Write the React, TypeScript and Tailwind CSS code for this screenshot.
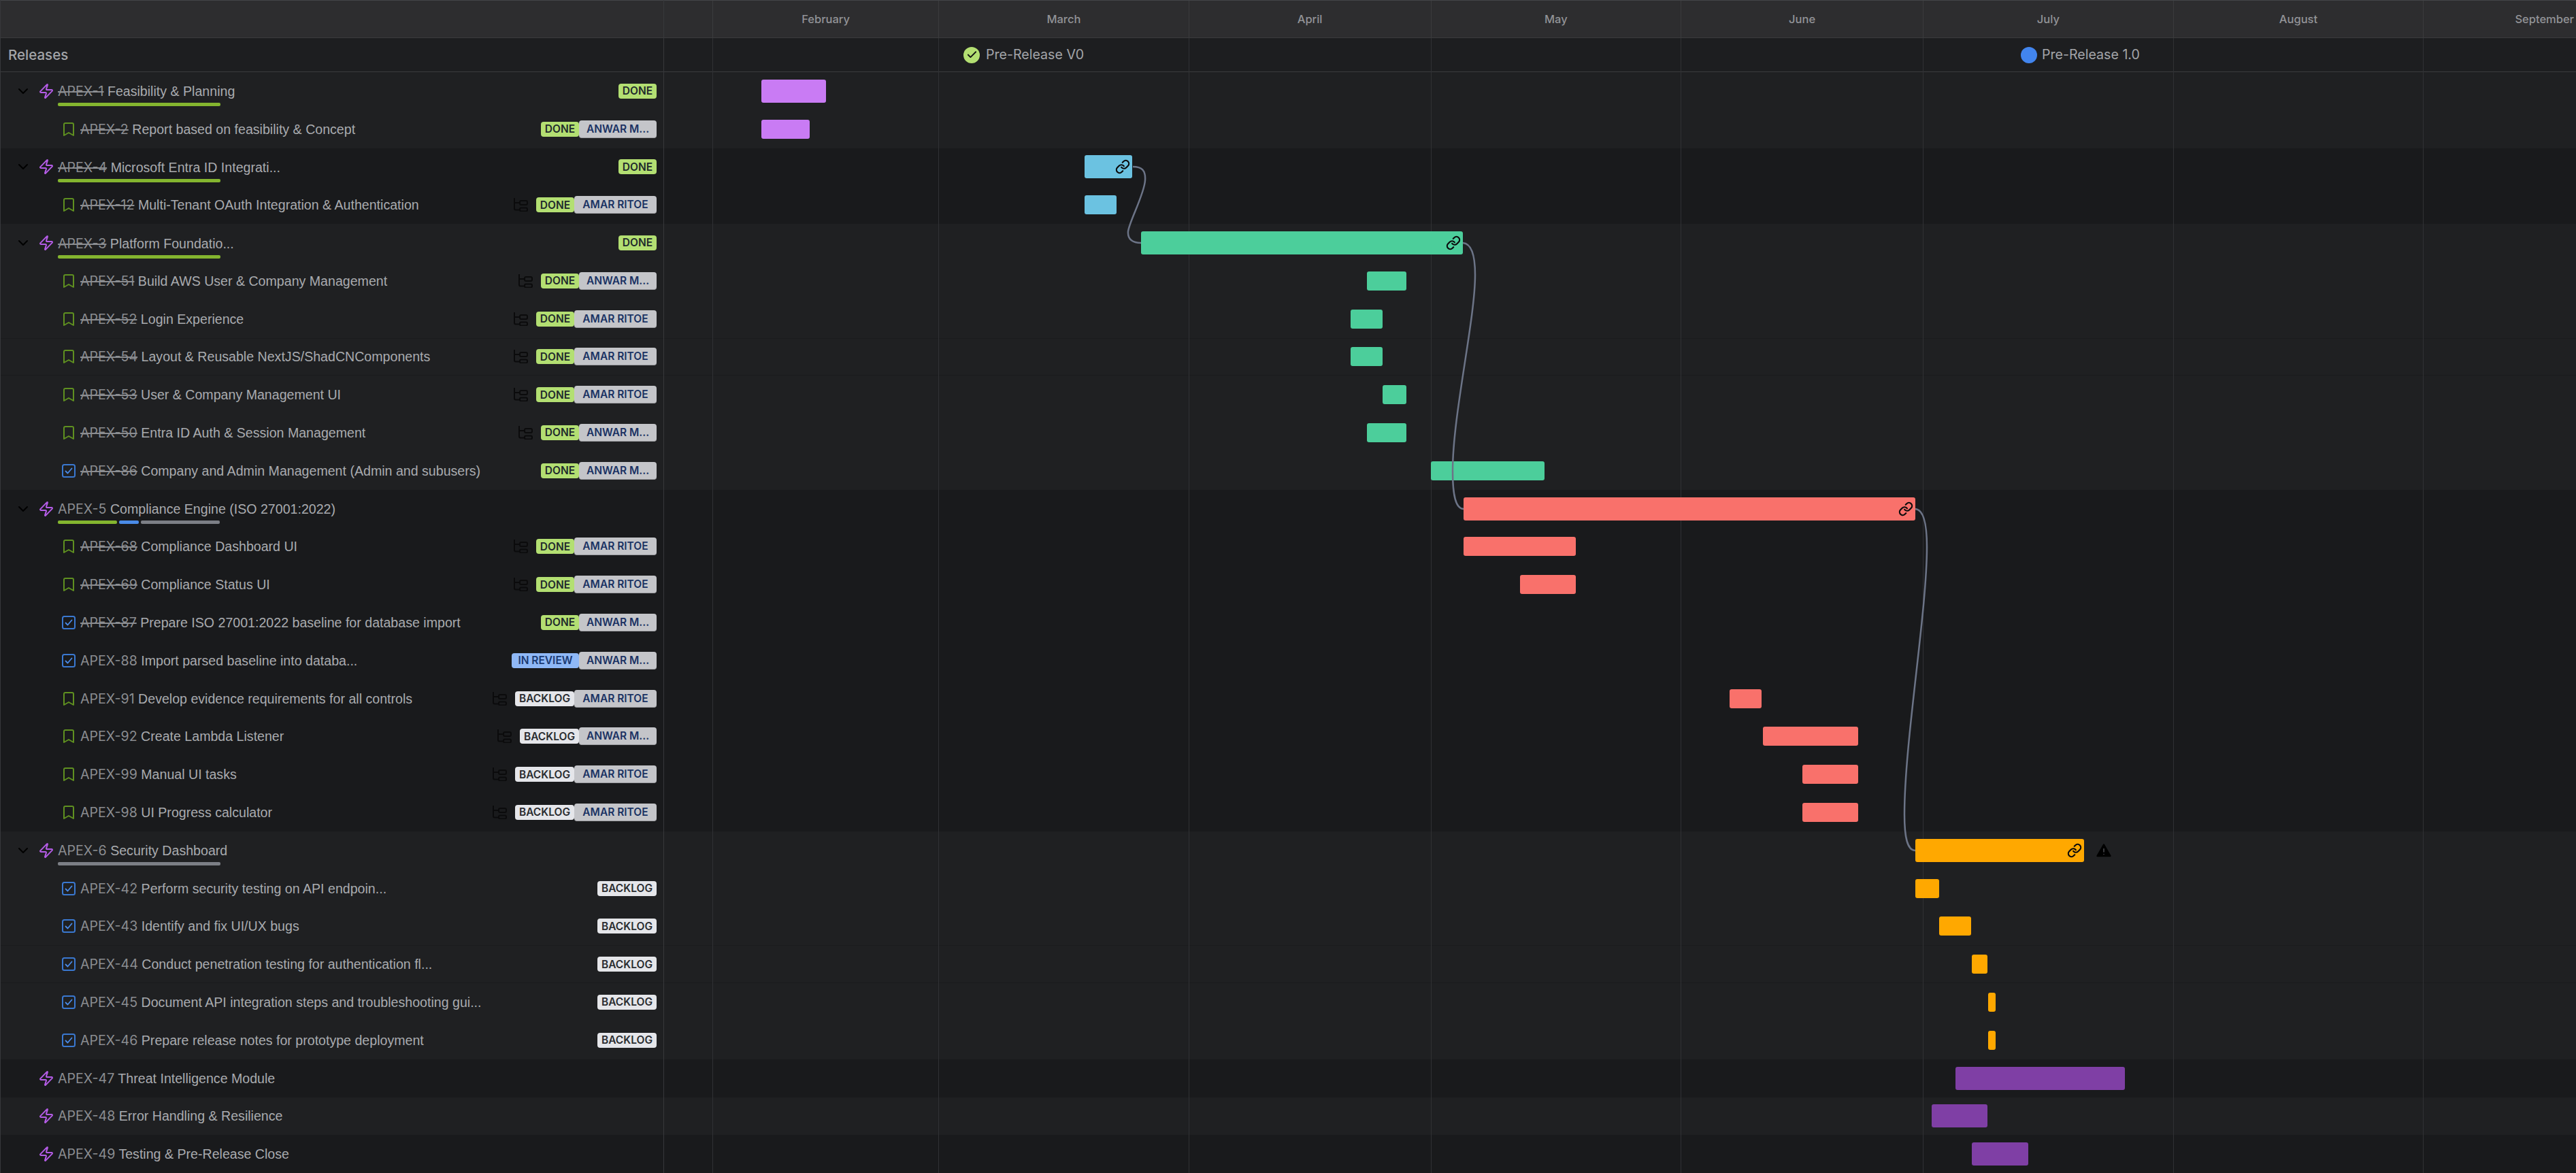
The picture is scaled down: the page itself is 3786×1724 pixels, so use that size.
import { Bookmark, Check, ChevronDown, Zap } from "lucide-react";

const DAY = 11.86;
const PANEL_W = 976;

type Status = "DONE" | "IN REVIEW" | "BACKLOG";

interface Row {
  kind: "epic" | "story" | "task";
  key: string;
  title: string;
  done?: boolean;
  status?: Status;
  owner?: string;
  tree?: boolean;
  progress?: { color: string; width: number }[];
  expandable?: boolean;
  bar?: [number, number];
  color?: string;
  link?: boolean;
  warn?: boolean;
  dark?: boolean;
  lined?: boolean;
}

const AMAR = "AMAR RITOE";
const ANWAR = "ANWAR M...";
const GREEN_BAR = [{ color: "#84b52f", width: 239 }];
const GRAY_BAR = [{ color: "#7c7f86", width: 239 }];

const PURPLE = "#c97bf4";
const BLUE = "#6bc2e1";
const GREEN = "#4cce9b";
const RED = "#f9716b";
const ORANGE = "#ffa800";
const VIOLET = "#7f3fa5";

const ROWS: Row[] = [
  { kind: "epic", key: "APEX-1", title: "Feasibility & Planning", done: true, status: "DONE", progress: GREEN_BAR, expandable: true, bar: [1119, 1214], color: PURPLE },
  { kind: "story", key: "APEX-2", title: "Report based on feasibility & Concept", done: true, status: "DONE", owner: ANWAR, bar: [1119, 1190], color: PURPLE },
  { kind: "epic", key: "APEX-4", title: "Microsoft Entra ID Integrati...", done: true, status: "DONE", progress: GREEN_BAR, expandable: true, bar: [1594, 1664], color: BLUE, link: true, dark: true },
  { kind: "story", key: "APEX-12", title: "Multi-Tenant OAuth Integration & Authentication", done: true, status: "DONE", owner: AMAR, tree: true, bar: [1594, 1641], color: BLUE, dark: true },
  { kind: "epic", key: "APEX-3", title: "Platform Foundatio...", done: true, status: "DONE", progress: GREEN_BAR, expandable: true, bar: [1677, 2150], color: GREEN, link: true },
  { kind: "story", key: "APEX-51", title: "Build AWS User & Company Management", done: true, status: "DONE", owner: ANWAR, tree: true, bar: [2009, 2067], color: GREEN },
  { kind: "story", key: "APEX-52", title: "Login Experience", done: true, status: "DONE", owner: AMAR, tree: true, bar: [1985, 2032], color: GREEN },
  { kind: "story", key: "APEX-54", title: "Layout & Reusable NextJS/ShadCNComponents", done: true, status: "DONE", owner: AMAR, tree: true, bar: [1985, 2032], color: GREEN, lined: true },
  { kind: "story", key: "APEX-53", title: "User & Company Management UI", done: true, status: "DONE", owner: AMAR, tree: true, bar: [2032, 2067], color: GREEN },
  { kind: "story", key: "APEX-50", title: "Entra ID Auth & Session Management", done: true, status: "DONE", owner: ANWAR, tree: true, bar: [2009, 2067], color: GREEN },
  { kind: "task", key: "APEX-86", title: "Company and Admin Management (Admin and subusers)", done: true, status: "DONE", owner: ANWAR, bar: [2103, 2270], color: GREEN },
  {
    kind: "epic", key: "APEX-5", title: "Compliance Engine (ISO 27001:2022)", expandable: true, dark: true, link: true,
    progress: [{ color: "#84b52f", width: 87 }, { color: "#4a8be8", width: 29 }, { color: "#7c7f86", width: 116 }],
    bar: [2151, 2815], color: RED,
  },
  { kind: "story", key: "APEX-68", title: "Compliance Dashboard UI", done: true, status: "DONE", owner: AMAR, tree: true, bar: [2151, 2316], color: RED, dark: true },
  { kind: "story", key: "APEX-69", title: "Compliance Status UI", done: true, status: "DONE", owner: AMAR, tree: true, bar: [2234, 2316], color: RED, dark: true },
  { kind: "task", key: "APEX-87", title: "Prepare ISO 27001:2022 baseline for database import", done: true, status: "DONE", owner: ANWAR, dark: true },
  { kind: "task", key: "APEX-88", title: "Import parsed baseline into databa...", status: "IN REVIEW", owner: ANWAR, dark: true },
  { kind: "story", key: "APEX-91", title: "Develop evidence requirements for all controls", status: "BACKLOG", owner: AMAR, tree: true, bar: [2542, 2589], color: RED, dark: true },
  { kind: "story", key: "APEX-92", title: "Create Lambda Listener", status: "BACKLOG", owner: ANWAR, tree: true, bar: [2591, 2731], color: RED, dark: true },
  { kind: "story", key: "APEX-99", title: "Manual UI tasks", status: "BACKLOG", owner: AMAR, tree: true, bar: [2649, 2731], color: RED, dark: true },
  { kind: "story", key: "APEX-98", title: "UI Progress calculator", status: "BACKLOG", owner: AMAR, tree: true, bar: [2649, 2731], color: RED, dark: true },
  { kind: "epic", key: "APEX-6", title: "Security Dashboard", expandable: true, progress: GRAY_BAR, bar: [2815, 3063], color: ORANGE, link: true, warn: true },
  { kind: "task", key: "APEX-42", title: "Perform security testing on API endpoin...", status: "BACKLOG", bar: [2815, 2850], color: ORANGE },
  { kind: "task", key: "APEX-43", title: "Identify and fix UI/UX bugs", status: "BACKLOG", bar: [2850, 2897], color: ORANGE },
  { kind: "task", key: "APEX-44", title: "Conduct penetration testing for authentication fl...", status: "BACKLOG", bar: [2898, 2921], color: ORANGE, lined: true },
  { kind: "task", key: "APEX-45", title: "Document API integration steps and troubleshooting gui...", status: "BACKLOG", bar: [2922, 2933], color: ORANGE },
  { kind: "task", key: "APEX-46", title: "Prepare release notes for prototype deployment", status: "BACKLOG", bar: [2922, 2933], color: ORANGE },
  { kind: "epic", key: "APEX-47", title: "Threat Intelligence Module", bar: [2874, 3123], color: VIOLET, dark: true },
  { kind: "epic", key: "APEX-48", title: "Error Handling & Resilience", bar: [2839, 2921], color: VIOLET },
  { kind: "epic", key: "APEX-49", title: "Testing & Pre-Release Close", bar: [2898, 2981], color: VIOLET, dark: true },
];

const MONTHS = [
  { name: "February", days: 28 },
  { name: "March", days: 31 },
  { name: "April", days: 30 },
  { name: "May", days: 31 },
  { name: "June", days: 30 },
  { name: "July", days: 31 },
  { name: "August", days: 31 },
  { name: "September", days: 30 },
];

const STATUS_STYLE: Record<Status, string> = {
  DONE: "bg-[#b3df72] text-[#1f2a2c] w-[56px]",
  "IN REVIEW": "bg-[#8fb8f6] text-[#1b3a72] w-[99px]",
  BACKLOG: "bg-[#e5e6ea] text-[#2a2c30] w-[87px]",
};

function TreeIcon() {
  return (
    <svg width="22" height="20" viewBox="0 0 22 20" fill="none" stroke="#0b0b0c" strokeWidth="2" className="shrink-0">
      <path d="M2 0v15.5a2 2 0 0 0 2 2h5M2 7h7" />
      <rect x="10" y="4" width="11" height="6" rx="2" />
      <rect x="10" y="14.5" width="11" height="5" rx="2" />
    </svg>
  );
}

function TaskIcon() {
  return (
    <svg width="24" height="24" viewBox="0 0 24 24" fill="none" strokeLinecap="round" strokeLinejoin="round" className="shrink-0 mr-[5px]">
      <rect x="3" y="3" width="18" height="18" rx="2.5" stroke="#3a78d0" strokeWidth="2" />
      <path d="M7.5 12.5l3 3l6-7" stroke="#4a8be8" strokeWidth="1.8" />
    </svg>
  );
}

function LinkIcon() {
  return (
    <svg width="22" height="22" viewBox="0 0 24 24" fill="none" stroke="#0b0b0c" strokeWidth="2.4" strokeLinecap="round" strokeLinejoin="round">
      <path d="M10 13a5 5 0 0 0 7.54.54l3-3a5 5 0 0 0-7.07-7.07l-1.72 1.71" />
      <path d="M14 11a5 5 0 0 0-7.54-.54l-3 3a5 5 0 0 0 7.07 7.07l1.71-1.71" />
    </svg>
  );
}

function WarnIcon() {
  return (
    <svg width="22" height="20" viewBox="0 0 22 20" className="ml-[18px] shrink-0">
      <path d="M11 1.5L20.5 18H1.5Z" fill="#000" stroke="#000" strokeWidth="2.4" strokeLinejoin="round" />
      <path d="M11 7v5.5M11 15v1" stroke="#3a3b3e" strokeWidth="2" />
    </svg>
  );
}

function rowBg(row: Row) {
  const base = row.dark ? "bg-[#191a1c]" : "bg-[#1f2022]";
  return row.lined ? `${base} border-y border-[#1a1b1d]` : base;
}

function LeftRow({ row }: { row: Row }) {
  const isEpic = row.kind === "epic";
  return (
    <div className={`h-[55.8px] flex items-center pr-[10px] ${rowBg(row)} ${isEpic ? "pl-[21px]" : "pl-[88px]"}`}>
      {isEpic && (
        <span className="w-[24px] mr-[10px] shrink-0">
          {row.expandable && <ChevronDown size={24} strokeWidth={2} color="#000" />}
        </span>
      )}
      {row.kind === "epic" && <Zap size={24} strokeWidth={2} color="#b45ce6" className="shrink-0 mr-[5px]" />}
      {row.kind === "story" && <Bookmark size={24} strokeWidth={2} color="#5f9020" className="shrink-0 mr-[5px]" />}
      {row.kind === "task" && <TaskIcon />}
      <div className={`flex flex-col min-w-0 ${row.progress ? "pt-[11px]" : ""}`}>
        <div className="text-[19.6px] leading-[24px] whitespace-nowrap text-[#a9abaf]">
          <span className={`font-[Inter] text-[#8b8d91] ${row.done ? "line-through decoration-2" : ""}`}>{row.key}</span> {row.title}
        </div>
        {row.progress && (
          <div className="flex gap-[3px] mt-[5px] w-[239px]">
            {row.progress.map((p, i) => (
              <div key={i} className="h-[5px] rounded-[2px]" style={{ width: p.width, background: p.color }} />
            ))}
          </div>
        )}
      </div>
      <div className="ml-auto flex items-center shrink-0 text-[15.5px] font-semibold font-[Inter]">
        {row.tree && <span className="mr-[12px] flex"><TreeIcon /></span>}
        {row.status && (
          <span className={`h-[22px] flex items-center justify-center rounded-[4px] ${STATUS_STYLE[row.status]}`}>{row.status}</span>
        )}
        {row.owner && (
          <span className={`h-[26px] flex items-center justify-center rounded-[4px] bg-[#c4c5c9] text-[#1a3263] border-b border-[#9c9da1] ${row.owner === AMAR ? "w-[121px]" : "w-[114px]"}`}>
            {row.owner}
          </span>
        )}
      </div>
    </div>
  );
}

function ChartRow({ row }: { row: Row }) {
  const isEpic = row.kind === "epic";
  return (
    <div className={`h-[55.8px] flex items-center ${rowBg(row)}`}>
      {row.bar && (
        <div
          className={`relative z-10 flex items-center justify-end pr-[3px] rounded-[3px] shrink-0 ${isEpic ? "h-[34px]" : "h-[28px]"}`}
          style={{ marginLeft: row.bar[0] - PANEL_W, width: row.bar[1] - row.bar[0], background: row.color }}
        >
          {row.link && <LinkIcon />}
        </div>
      )}
      {row.warn && <WarnIcon />}
    </div>
  );
}

export default function App() {
  return (
    <div className="w-[3786px] h-[1724px] overflow-hidden flex bg-[#1f2022] font-['Liberation_Sans',Arial,sans-serif]">
      {/* Left panel */}
      <div className="w-[976px] shrink-0 border-l border-r border-[#37383b]">
        <div className="h-[56px] bg-[#2d2d2f] border-t border-b border-t-[#444548] border-b-[#3a3b3d]" />
        <div className="h-[50px] bg-[#1d1e20] border-b border-[#3a3b3d] flex items-center pl-[11px] pt-[2px] text-[20.5px] font-medium text-[#a3a5a9] font-[Inter]">
          Releases
        </div>
        {ROWS.map((r) => <LeftRow key={r.key} row={r} />)}
      </div>

      {/* Timeline */}
      <div className="relative flex-1 min-w-0 overflow-hidden font-[Inter]">
        <div className="h-[56px] bg-[#2d2d2f] border-t border-b border-t-[#444548] border-b-[#3a3b3d] flex">
          <div className="w-[71px] shrink-0" />
          {MONTHS.map((m) => (
            <div key={m.name} className="shrink-0 border-l border-[#3a3b3d] flex items-center justify-center text-[16.5px] font-medium text-[#929397]" style={{ width: m.days * DAY }}>
              {m.name}
            </div>
          ))}
        </div>
        <div className="h-[50px] bg-[#1d1e20] border-b border-[#3a3b3d] flex items-center text-[19.6px] text-[#a3a5a9]">
          <div className="ml-[440px] w-[24px] h-[24px] rounded-full bg-[#b3df72] flex items-center justify-center shrink-0">
            <Check size={17} strokeWidth={2.6} color="#111" />
          </div>
          <span className="ml-[9px] w-[1521px] shrink-0">Pre-Release V0</span>
          <div className="w-[24px] h-[24px] rounded-full bg-[#4285ee] shrink-0" />
          <span className="ml-[7px]">Pre-Release 1.0</span>
        </div>
        {ROWS.map((r) => <ChartRow key={r.key} row={r} />)}

        {/* Month grid lines */}
        <div className="absolute left-0 right-0 top-[56px] bottom-0 flex pointer-events-none">
          <div className="w-[71px] shrink-0" />
          {MONTHS.map((m) => (
            <div key={m.name} className="shrink-0 border-l border-[#303134]" style={{ width: m.days * DAY }} />
          ))}
        </div>

        {/* Dependency links */}
        <svg className="absolute left-0 top-0 z-20 pointer-events-none" width={3786 - PANEL_W} height={1724} viewBox={`${PANEL_W} 0 ${3786 - PANEL_W} 1724`} fill="none" stroke="#6c7487" strokeWidth="2.5">
          <path d="M1665 245C1678 245 1684 250 1683 265C1682 285 1660 325 1658 340C1657 352 1665 357 1677 357" />
          <path d="M2150 357C2163 358 2168 375 2168 404C2168 470 2135 610 2135 692C2135 730 2140 748 2151 748" />
          <path d="M2815 748C2827 749 2832 770 2832 804C2832 900 2799 1090 2799 1197C2799 1230 2803 1250 2815 1250" />
        </svg>
      </div>
    </div>
  );
}
